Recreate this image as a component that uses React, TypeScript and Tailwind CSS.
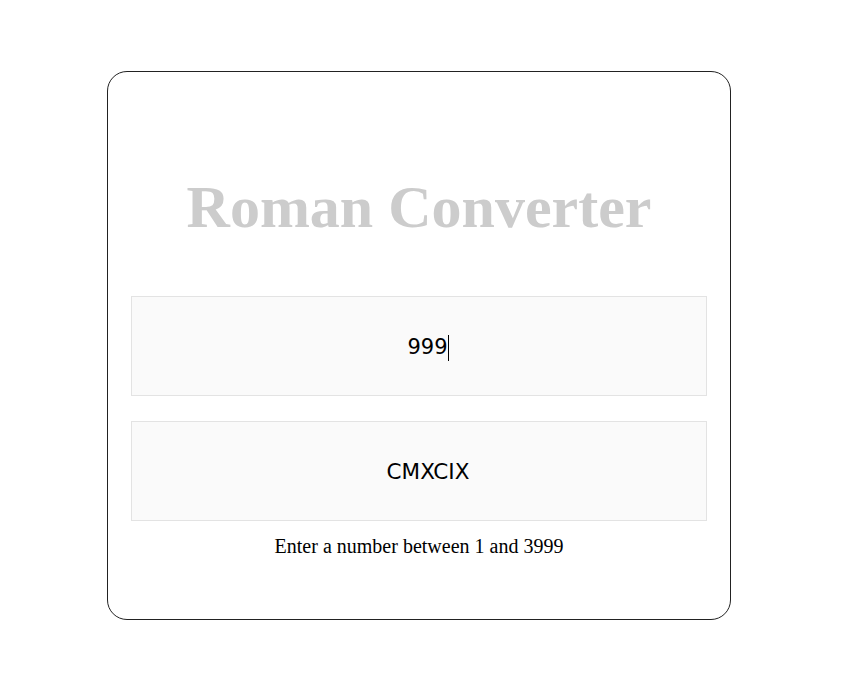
export default function App() {
  return (
    <div className="min-h-screen bg-white pt-[71px] pl-[107px]">
      <div className="w-[624px] h-[549px] rounded-[20px] border border-[#222] px-[23px] pt-[105px]">
        <h1
          className="text-center text-[60px] leading-[60px] font-bold text-[#cccccc]"
          style={{ fontFamily: '"Liberation Serif", serif' }}
        >
          Roman Converter
        </h1>
        <div className="mt-[59px] flex flex-col gap-[25px]">
          <div
            className="h-[100px] border border-[#e3e3e3] bg-[#fafafa] flex items-center justify-center pl-[18px] pt-[3px] text-[21px] text-black"
            style={{ fontFamily: '"DejaVu Sans", sans-serif' }}
          >
            <span>999</span>
            <span className="w-px h-[26px] bg-black" />
          </div>
          <div
            className="h-[100px] border border-[#e3e3e3] bg-[#fafafa] flex items-center justify-center pl-[18px] pt-[3px] text-[21.5px] text-black"
            style={{ fontFamily: '"DejaVu Sans", sans-serif' }}
          >
            CMXCIX
          </div>
        </div>
        <p
          className="mt-[13px] text-center text-[20px] leading-[24px] text-black"
          style={{ fontFamily: '"Liberation Serif", serif' }}
        >
          Enter a number between 1 and 3999
        </p>
      </div>
    </div>
  );
}
